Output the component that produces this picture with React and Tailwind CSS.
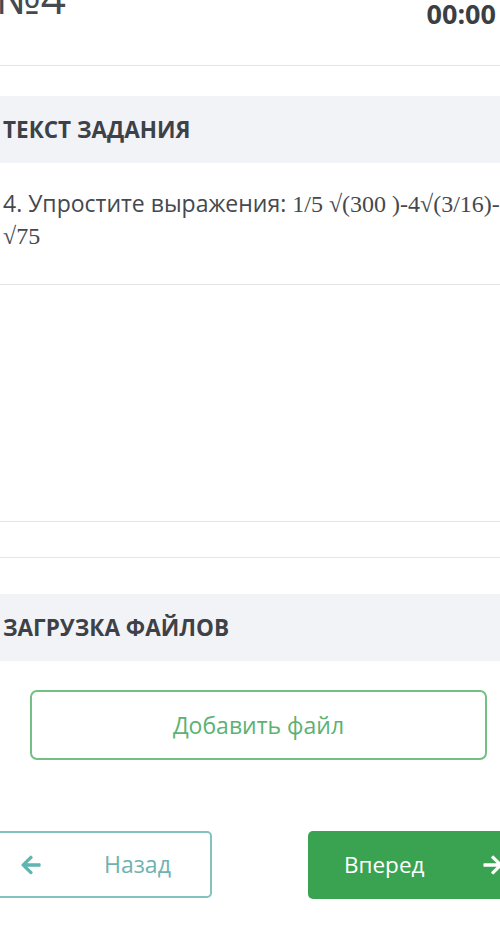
import { FaArrowLeft, FaArrowRight } from "react-icons/fa";

const sans = { fontFamily: '"Open Sans", "Noto Sans", sans-serif' };
const serif = { fontFamily: '"Liberation Serif", "DejaVu Serif", serif' };

export default function App() {
  return (
    <div
      className="w-[500px] h-[932px] overflow-hidden bg-white text-[#3d4148]"
      style={sans}
    >
      {/* header */}
      <div className="flex items-start justify-between h-[65px] pr-[4px]">
        <div className="-mt-[29px] text-[44px] leading-[52px] text-[#454950] -ml-[4px]">
          №4
        </div>
        <div className="text-[27px] leading-[27px] font-bold text-[#3a3e45]">
          00:00
        </div>
      </div>
      <div className="h-px bg-[#e4e4e6]" />

      <div className="h-[30px]" />
      <div className="h-[67px] bg-[#f2f3f7] flex items-center pl-[3px]">
        <h2 className="text-[22.5px] font-bold">ТЕКСТ ЗАДАНИЯ</h2>
      </div>

      <div className="pt-[24px] pl-[3px] h-[121px] text-[23px] leading-[32px] text-[#45494f]">
        <div className="whitespace-nowrap">
          4. Упростите выражения:{" "}
          <span style={serif} className="text-[24px]">1/5 √(300 )-4√(3/16)-</span>
        </div>
        <div style={serif} className="text-[24px]">√75</div>
      </div>
      <div className="h-px bg-[#e4e4e6]" />

      <div className="h-[236px]" />
      <div className="h-px bg-[#e4e4e6]" />
      <div className="h-[35px]" />
      <div className="h-px bg-[#e4e4e6]" />

      <div className="h-[36px]" />
      <div className="h-[67px] bg-[#f2f3f7] flex items-center pl-[3px]">
        <h2 className="text-[22.5px] font-bold">ЗАГРУЗКА ФАЙЛОВ</h2>
      </div>

      <div className="pt-[29px] pl-[30px] pr-[13px]">
        <button className="w-full h-[70px] border-2 border-[#72c083] rounded-[7px] text-[23px] text-[#5cb272]">
          Добавить файл
        </button>
      </div>

      <div className="mt-[71px] -ml-[20px] w-[560px] flex justify-between">
        <button className="w-[232px] h-[67px] border-2 border-[#84c2c1] rounded-[5px] flex items-center pl-[38px] text-[#6fb2b0]">
          <FaArrowLeft className="text-[22px] text-[#5fb5b1]" />
          <span className="ml-[62px] text-[23px]">Назад</span>
        </button>
        <button className="w-[232px] h-[68px] bg-[#3aa351] rounded-[5px] flex items-center pl-[36px] text-white">
          <span className="text-[22.5px]">Вперед</span>
          <FaArrowRight className="ml-[58px] text-[22px]" />
        </button>
      </div>
    </div>
  );
}
